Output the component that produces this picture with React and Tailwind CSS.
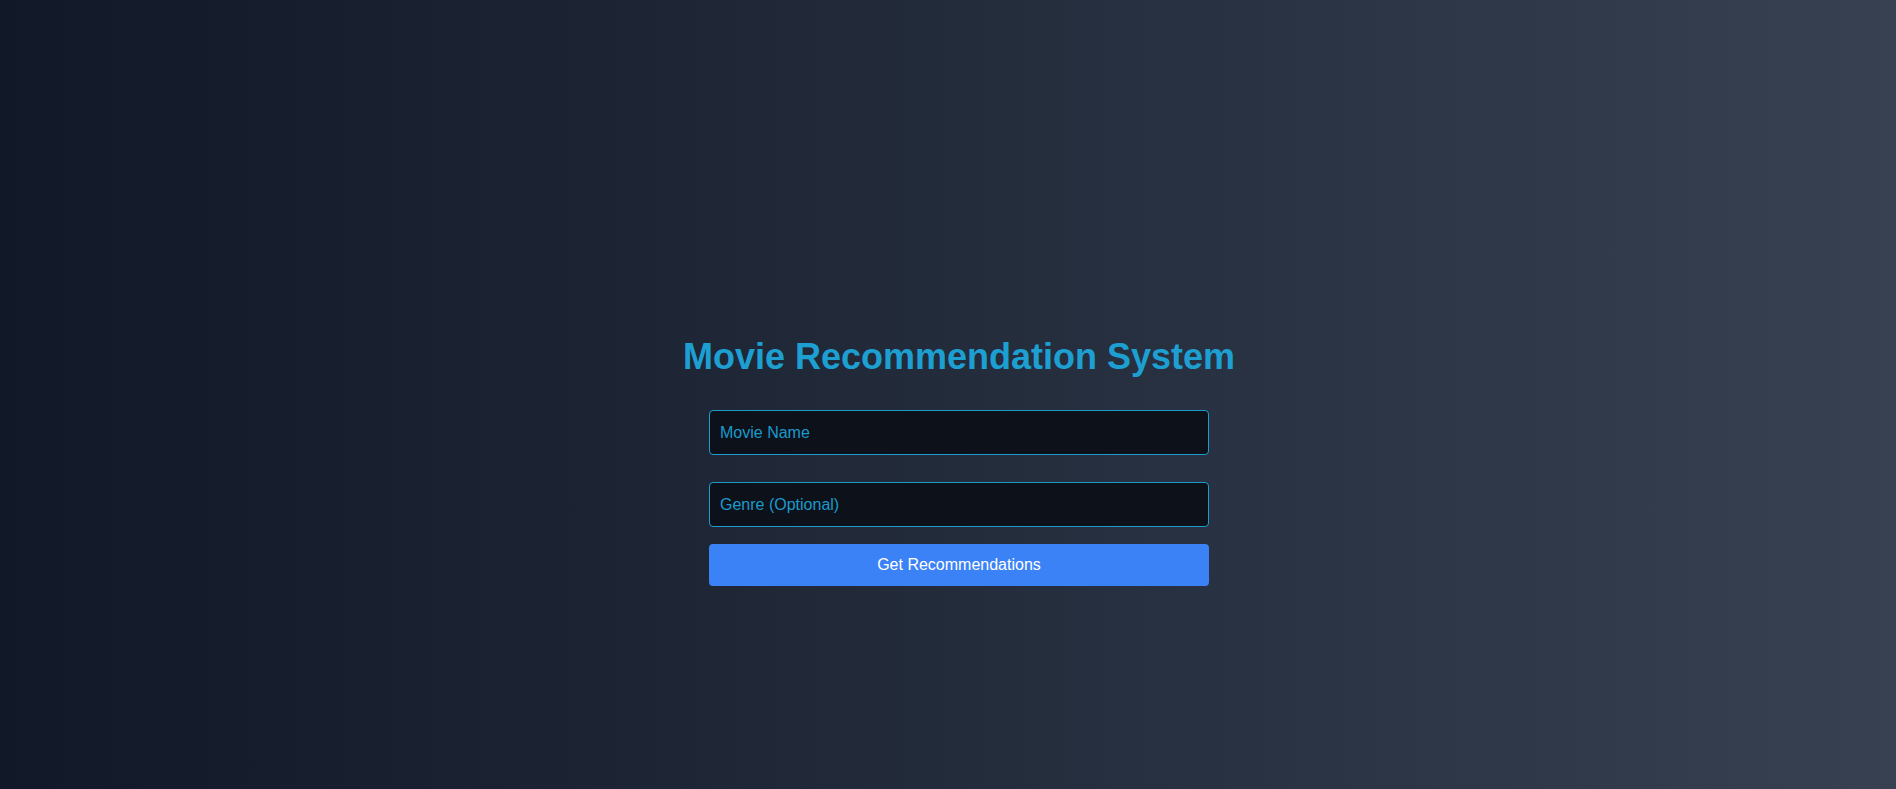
import React, { useState } from "react";

const App = () => {
  const [movie, setMovie] = useState("");
  const [genre, setGenre] = useState("");

  return (
    <div
      className="min-h-screen w-full bg-gradient-to-r from-[#111827] to-[#374151] flex flex-col items-center pt-[337px] pl-[22px]"
      style={{ fontFamily: '"Liberation Sans", Arial, sans-serif' }}
    >
      <h1 className="text-4xl leading-10 font-bold text-[#1d9fd2] mb-[33px]">
        Movie Recommendation System
      </h1>

      <div className="w-[500px] flex flex-col">
        <input
          type="text"
          value={movie}
          onChange={(e) => setMovie(e.target.value)}
          placeholder="Movie Name"
          className="h-[45px] w-full px-[10px] text-base bg-[#0d111a] border border-[#1c9bcc] rounded text-[#1d9fd2] placeholder:text-[#1b9acb] outline-none mb-[27px]"
        />
        <input
          type="text"
          value={genre}
          onChange={(e) => setGenre(e.target.value)}
          placeholder="Genre (Optional)"
          className="h-[45px] w-full px-[10px] text-base bg-[#0d111a] border border-[#1c9bcc] rounded text-[#1d9fd2] placeholder:text-[#1b9acb] outline-none mb-[17px]"
        />
        <button className="h-[42px] w-full bg-[#3b82f6] text-white text-base rounded">
          Get Recommendations
        </button>
      </div>
    </div>
  );
};

export default App;
